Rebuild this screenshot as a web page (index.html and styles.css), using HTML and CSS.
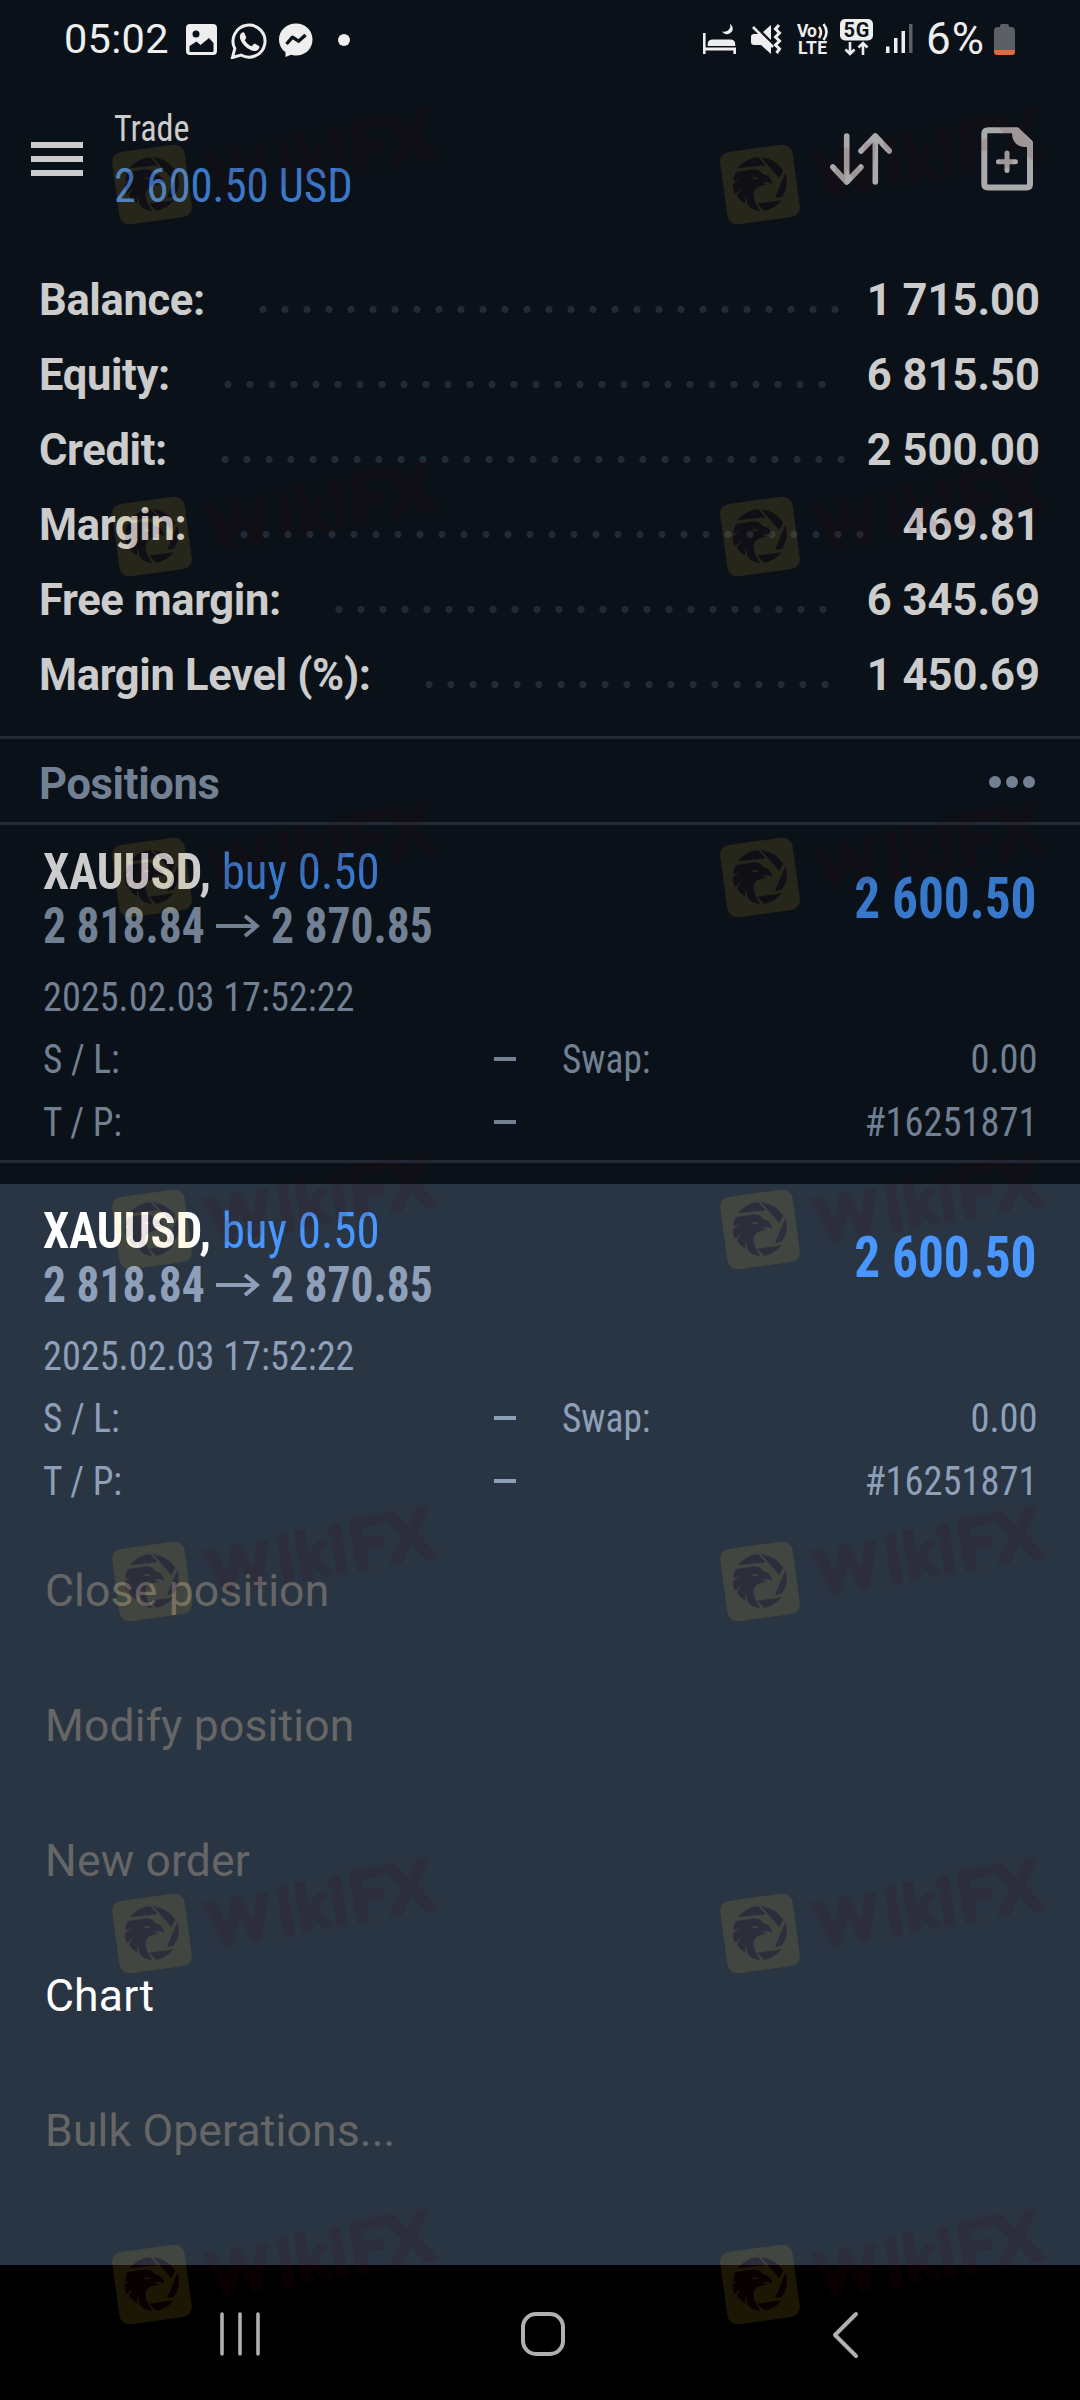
FILE: index.html
```html
<!DOCTYPE html>
<html lang="en">
  <head>
    <meta charset="UTF-8">
    <title>Trade</title>
    <link rel="stylesheet" href="styles.css">
  </head>
  <body>
    <div class="status-bar">
      <span class="clock">05:02</span>
      <svg class="status-icons-left" width="140" height="40" viewBox="0 0 140 40">
        <path fill="#eee" fill-rule="evenodd" d="M4 5h23q4 0 4 4v23q0 4-4 4H4q-4 0-4-4V9q0-4 4-4zM3.500 27v5q0 1 1 1h22q1 0 1-1v-8l-4.500-5-8.500 7-4-3.500zM6.500 15a3.500 3.500 0 1 0 7 0 3.500 3.500 0 1 0-7 0z"/>
        <path fill="none" stroke="#eee" stroke-width="3" d="M46.500 38.500l2.300-9A16 16 0 1 1 55 36z"/>
        <path fill="#eee" d="M55.500 14c1-1 2.500-1 3 .3l1.600 3.700c.3 1-.5 2-1.400 3 1.500 3 3.800 5 7 6.300l2-2.200c.6-.6 1.300-.6 2 0l3.200 1.800c1.300.8.300 4-2.400 4.800-3 1-8.200-1-12-5-4-4.200-6.500-9.500-3-12.700z"/>
        <path fill="#eee" d="M110 4.500c9.700 0 16.500 7 16.500 16S119.700 36.500 110 36.500c-2 0-3.500-.2-5-.7L99.500 38v-4.700c-4-3.100-6.500-7.500-6.500-12.800C93 11.500 100.300 4.500 110 4.500z"/>
        <path fill="none" stroke="#0b1118" stroke-width="3.400" stroke-linejoin="round" d="M100.500 25l6-6.800 6 4 7-6.200"/>
      </svg>
      <span class="status-dot"></span>
      <svg class="status-icons-right" width="220" height="40" viewBox="0 0 220 40">
        <g fill="#eee">
          <path d="M0 14h2.600v14.500H33V35h-2.600v-3.500H2.600V35H0zM4.700 27v-2q0-4.500 5-4.500h17.500q5 0 5 4.500v2z"/>
          <path d="M27 4.800q4.500 3.700 1.800 8-4.300 5-10.300-.3 5 1 7.500-2 2-2.700 1-5.700z"/>
          <path d="M48 18q0-3 3-3h6l11 11v9l-10-9h-7q-3 0-3-3zM60 13l8-7v15z"/>
          <rect x="137" y="0" width="33" height="21.500" rx="5"/>
          <path d="M183 27.500h3.500V34H183zM191 19h3.500v15H191zM198.500 12h3.500v22h-3.500z"/>
          <path fill="#5d5f67" d="M206 5h3.500v29H206z"/>
        </g>
        <g fill="none" stroke="#eee" stroke-width="2.600">
          <path d="M50 8l20 20"/>
          <path stroke-width="3" d="M76 6l-3.500 4 4 4-4 4 4 4-4 4 4 4-3 4"/>
          <path d="M116 8q4 5 0 11M120.500 5q6 8 0 16"/>
          <path d="M147 23v12M142.500 30.500l4.500 4.500 4.500-4.500M160 36V24M155.500 28.500L160 24l4.500 4.500"/>
        </g>
        <text class="net-text" x="94" y="18" textLength="20">Vo</text>
        <text class="net-text" x="95" y="35" textLength="29">LTE</text>
        <text class="net-5g" x="140.500" y="17.500" textLength="26">5G</text>
      </svg>
      <span class="battery-text">6%</span>
      <svg class="battery" width="22" height="34" viewBox="0 0 22 34">
        <path fill="#5d5f67" d="M6 4V3q0-2 2-2h5q2 0 2 2v1h2q4 0 4 4v19H0V8q0-4 4-4z"/>
        <path fill="#e2683f" d="M0 27h21v2q0 3-3 3H3q-3 0-3-3z"/>
      </svg>
    </div>

    <div class="header">
      <div class="menu-btn"><i></i><i></i><i></i></div>
      <div class="header-title">
        <div class="title cond">Trade</div>
        <div class="profit-total cond">2 600.50 USD</div>
      </div>
      <svg class="sort-icon" width="62" height="52" viewBox="0 0 62 52">
        <path fill="none" stroke="#aaa" stroke-width="5.600" stroke-linecap="round" stroke-linejoin="round" d="M16.700 3v46M2.800 34l13.900 15L31 34M45.300 49V3M31 18L45.300 3l14 15"/>
      </svg>
      <svg class="order-icon" width="53" height="64" viewBox="0 0 53 64">
        <path fill="none" stroke="#aaa" stroke-width="6" stroke-linejoin="round" d="M7 3.300h29L49 16v41q0 3.500-3.500 3.500H7Q3.300 60.500 3.300 57V7Q3.300 3.300 7 3.300z"/>
        <path fill="#aaa" d="M31 2h5l15 14v4h-7Q31 19 31 6z"/>
        <path fill="none" stroke="#aaa" stroke-width="5" stroke-linecap="round" d="M17.500 34.800h17M26 26v17.500"/>
      </svg>
    </div>

    <div class="summary">
      <div class="summary-row"><span class="label">Balance:</span><div class="leader"></div><span>1 715.00</span></div>
      <div class="summary-row"><span class="label">Equity:</span><div class="leader"></div><span>6 815.50</span></div>
      <div class="summary-row"><span class="label">Credit:</span><div class="leader"></div><span>2 500.00</span></div>
      <div class="summary-row"><span class="label">Margin:</span><div class="leader"></div><span>469.81</span></div>
      <div class="summary-row"><span class="label">Free margin:</span><div class="leader"></div><span>6 345.69</span></div>
      <div class="summary-row"><span class="label">Margin Level (%):</span><div class="leader"></div><span>1 450.69</span></div>
    </div>

    <div class="section-head">
      <span class="label">Positions</span>
      <div class="more"><i></i><i></i><i></i></div>
    </div>

    <div class="position dimmed">
      <div class="position-top">
        <div>
          <div class="line"><span class="cond"><b class="symbol">XAUUSD,</b> <span class="side">buy 0.50</span></span></div>
          <div class="line prices">
            <span class="cond">2 818.84</span>
            <svg width="44" height="24" viewBox="0 0 44 24"><path fill="none" stroke="currentColor" stroke-width="4" d="M0 12h41M29 2l12 10-12 10"/></svg>
            <span class="cond">2 870.85</span>
          </div>
        </div>
        <div class="profit cond end">2 600.50</div>
      </div>
      <div class="date"><span class="cond">2025.02.03 17:52:22</span></div>
      <div class="details">
        <span class="cond">S / L:</span><i class="dash"></i><span class="cond">Swap:</span><span class="cond end">0.00</span>
        <span class="cond">T / P:</span><i class="dash"></i><span></span><span class="cond end">#16251871</span>
      </div>
    </div>

    <div class="sheet">
      <div class="position">
        <div class="position-top">
          <div>
            <div class="line"><span class="cond"><b class="symbol">XAUUSD,</b> <span class="side">buy 0.50</span></span></div>
            <div class="line prices">
              <span class="cond">2 818.84</span>
              <svg width="44" height="24" viewBox="0 0 44 24"><path fill="none" stroke="currentColor" stroke-width="4" d="M0 12h41M29 2l12 10-12 10"/></svg>
              <span class="cond">2 870.85</span>
            </div>
          </div>
          <div class="profit cond end">2 600.50</div>
        </div>
        <div class="date"><span class="cond">2025.02.03 17:52:22</span></div>
        <div class="details">
          <span class="cond">S / L:</span><i class="dash"></i><span class="cond">Swap:</span><span class="cond end">0.00</span>
          <span class="cond">T / P:</span><i class="dash"></i><span></span><span class="cond end">#16251871</span>
        </div>
      </div>
      <div class="menu">
        <div class="menu-item disabled">Close position</div>
        <div class="menu-item disabled">Modify position</div>
        <div class="menu-item disabled">New order</div>
        <div class="menu-item">Chart</div>
        <div class="menu-item disabled">Bulk Operations...</div>
      </div>
    </div>

    <div class="nav-bar">
      <svg width="40" height="46" viewBox="0 0 40 46"><path fill="none" stroke="#b0b0b0" stroke-width="3.600" stroke-linecap="round" d="M2 3v40M20 3v40M38 3v40"/></svg>
      <svg width="46" height="46" viewBox="0 0 46 46"><rect x="3" y="3" width="40" height="40" rx="13" fill="none" stroke="#b0b0b0" stroke-width="4"/></svg>
      <svg width="28" height="48" viewBox="0 0 28 48"><path fill="none" stroke="#b0b0b0" stroke-width="4" stroke-linecap="round" stroke-linejoin="round" d="M25 3L4 24l21 21"/></svg>
    </div>

    <svg class="watermarks" width="1080" height="2400" viewBox="0 0 1080 2400">
      <defs>
        <g id="mark">
          <rect x="3.500" y="4" width="73" height="73" rx="10" fill="#ffcd32" transform="rotate(-7.800 40 40.500)"/>
          <!-- aperture blades and eagle head -->
          <g transform="translate(-5 -6) scale(.3333)" fill="#47000a">
            <path d="M68 91Q92 60 130 57L152 82zM138 57Q180 62 205 97L193 121zM211 105Q224 145 200 176L180 180zM126 197L200 187Q178 215 148 218z"/>
            <path d="M63 102L118 94Q138 96 143 108Q168 112 172 137Q158 130 140 133L158 140Q122 143 116 162Q112 185 136 219Q112 218 98 200L92 172L90 196Q70 185 66 170L80 150L60 168Q54 158 53 140L72 122L55 132Q56 112 63 102z"/>
            <path fill="#ffcd32" d="M108 118L132 119Q121 129 108 118z"/>
          </g>
          <text class="mark-text" transform="translate(97 54) rotate(-10)"><tspan x="4" class="mark-w">W</tspan><tspan x="74">i</tspan><tspan x="93">k</tspan><tspan x="128">i</tspan><tspan x="147" class="mark-caps">F</tspan><tspan class="mark-caps" x="186">X</tspan></text>
        </g>
        <g id="mark-row">
          <use href="#mark" x="112"/>
          <use href="#mark" x="720"/>
        </g>
      </defs>
      <use href="#mark-row" y="144"/>
      <use href="#mark-row" y="496"/>
      <use href="#mark-row" y="837"/>
      <use href="#mark-row" y="1189"/>
      <use href="#mark-row" y="1541"/>
      <use href="#mark-row" y="1893"/>
      <use href="#mark-row" y="2244"/>
    </svg>
  </body>
</html>
```
FILE: styles.css
```css
:root {
  --bg: #0b1118;
  --sheet: #2a3543;
  --line: #232a36;
  --text: #cccccc;
  --muted: #718093;
  --blue: #3b79cb;
}

* {
  box-sizing: border-box;
}

body {
  position: relative;
  width: 1080px;
  height: 2400px;
  margin: 0;
  overflow: hidden;
  display: flex;
  flex-direction: column;
  background: var(--bg);
  color: var(--text);
  font-family: Roboto, "Liberation Sans", sans-serif;
}

/* condensed face, squeezed a little more than the font allows */
.cond {
  display: inline-block;
  font-family: "Roboto Condensed", Roboto, sans-serif;
  font-stretch: 75%;
  white-space: nowrap;
  transform: scaleX(0.91);
  transform-origin: left;
}

.cond.end {
  text-align: right;
  transform: scaleX(0.938);
  transform-origin: right;
}

.status-bar {
  display: flex;
  height: 80px;
  padding: 19px 64px 0 64px;
  color: #eee;
}

.clock {
  width: 122px;
  font-size: 41.5px;
  letter-spacing: 0.3px;
  line-height: 40px;
}

.status-dot {
  width: 12px;
  height: 12px;
  margin: 15px 0 0 12px;
  border-radius: 50%;
  background: #eee;
}

.status-icons-right {
  margin-left: auto;
}

.battery-text {
  width: 66px;
  margin-left: 3px;
  font-size: 44px;
  letter-spacing: 1px;
  line-height: 40px;
}

.battery {
  margin: 4px 0 0 2px;
}

.net-text {
  fill: #eee;
  font-size: 17.5px;
  font-weight: 700;
}

.net-5g {
  fill: var(--bg);
  font-size: 20px;
  font-weight: 700;
}

.header {
  display: flex;
  height: 183px;
  padding: 0 46px 0 31px;
}

.menu-btn {
  display: flex;
  flex-direction: column;
  gap: 8px;
  width: 52px;
  padding-top: 62px;
}

.menu-btn i {
  height: 6px;
  background: var(--text);
}

.header-title {
  display: flex;
  flex: 1;
  flex-direction: column;
  align-items: flex-start;
  padding: 20px 0 0 31px;
}

.title {
  font-size: 37.5px;
  line-height: 56px;
}

.profit-total {
  color: var(--blue);
  font-size: 48px;
  line-height: 60px;
  transform: scaleX(0.932);
}

.sort-icon {
  margin: 53px 89px 0 0;
}

.order-icon {
  margin-top: 47px;
}

.summary {
  height: 473px;
  padding: 0 40px 0 39px;
  font-size: 43.5px;
  font-weight: 700;
}

.label {
  letter-spacing: -0.35px;
}

.summary-row {
  display: flex;
  height: 75px;
  line-height: 75px;
}

.leader {
  flex: 1;
  margin: 0 14px 0 47px;
}

/* only whole dots: the strip is cut to a multiple of the pitch */
.leader::before {
  content: "";
  display: block;
  width: round(down, 100%, 22px);
  height: 7px;
  margin-top: 43px;
  background: radial-gradient(circle, #222a37 3.2px, transparent 3.9px) 0 0 / 22px 7px repeat-x;
}

.section-head {
  display: flex;
  justify-content: space-between;
  height: 89px;
  padding: 0 45px 0 39px;
  border-top: 3px solid var(--line);
  border-bottom: 3px solid var(--line);
  color: var(--muted);
  font-size: 43.5px;
  font-weight: 700;
  line-height: 91px;
}

.more {
  display: flex;
  gap: 5px;
  padding-top: 37px;
}

.more i {
  width: 12px;
  height: 12px;
  border-radius: 50%;
  background: var(--muted);
}

.position {
  --muted: #8ea0b9;
  --blue: #4896ff;
  --text: #ffffff;
  height: 340px;
  padding: 20px 43px 0 43px;
  color: var(--muted);
}

.position.dimmed {
  --muted: #718093;
  --blue: #3878cb;
  --text: #cccccc;
  height: 338px;
  border-bottom: 3px solid var(--line);
}

.position-top {
  display: flex;
  justify-content: space-between;
}

.line {
  height: 54px;
  font-size: 50px;
  line-height: 54px;
}

.line > .cond {
  transform: scaleX(0.938);
}

.symbol {
  color: var(--text);
}

.side {
  color: var(--blue);
}

.prices {
  display: grid;
  grid-template-columns: 173px 55px auto;
  align-items: center;
  font-weight: 700;
}

.prices > .cond {
  transform: scaleX(0.91);
}

.cond.profit {
  color: var(--blue);
  font-size: 57px;
  font-weight: 700;
  line-height: 108px;
  transform: scaleX(0.9);
}

.date {
  height: 75px;
  padding-top: 13px;
  font-size: 41px;
  line-height: 62px;
}

.date .cond {
  transform: scaleX(0.934);
}

.details {
  display: grid;
  grid-template-columns: 451px 68px 1fr 1fr;
  grid-auto-rows: 63px;
  font-size: 41px;
  line-height: 63px;
}

.dash {
  width: 22px;
  height: 4px;
  margin-top: 29px;
  background: var(--muted);
}

.sheet {
  height: 1081px;
  margin-top: 21px;
  background: var(--sheet);
  flex-shrink: 0;
}

.menu-item {
  height: 135px;
  padding-left: 45px;
  color: #fff;
  font-size: 44.5px;
  letter-spacing: 0.15px;
  line-height: 135px;
}

.menu-item.disabled {
  color: #666;
}

.nav-bar {
  display: flex;
  justify-content: space-between;
  align-items: flex-start;
  flex: 1;
  padding: 46px 221px 0 220px;
  background: #000;
}

.nav-bar svg:nth-child(2) {
  margin-right: 6px;
}

.watermarks {
  position: absolute;
  top: 0;
  left: 0;
  opacity: 0.11;
}

.mark-text {
  fill: #47000a;
  stroke: #47000a;
  stroke-width: 6px;
  stroke-linejoin: round;
  font-family: Lato, sans-serif;
  font-size: 62px;
  font-weight: 400;
}

.mark-w {
  font-size: 59px;
}

.mark-caps {
  font-size: 67px;
}
```
